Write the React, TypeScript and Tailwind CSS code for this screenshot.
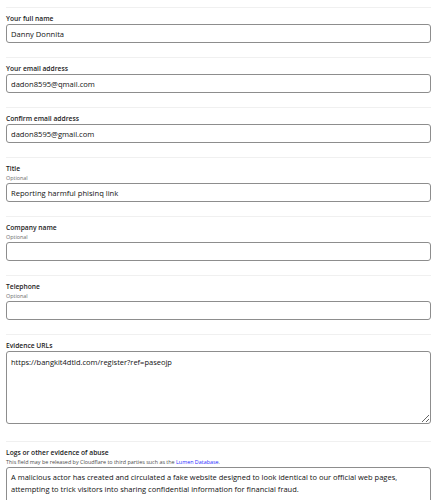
import React from "react";

type FieldProps = {
  label: string;
  value?: string;
  optional?: boolean;
};

const font = { fontFamily: '"Open Sans", "Noto Sans", sans-serif' };

const Field = ({ label, value = "", optional }: FieldProps) => {
  return (
    <div className="border-t border-[#f0f0f0] pt-[6px] pb-[14px]">
      <div className="text-[6.7px] leading-[10px] font-semibold text-[#1b1b1b]">{label}</div>
      {optional && <div className="text-[5.4px] leading-[9px] text-[#6b6b6b]">Optional</div>}
      <input
        className="block w-full h-[19px] rounded-[3px] border border-[#8d8d8d] px-[4px] text-[7.6px] text-[#111] outline-none"
        defaultValue={value}
        readOnly
      />
    </div>
  );
};

export default function App() {
  return (
    <div className="bg-white h-[500px] pt-[7px] pl-[6px] pr-[1px] overflow-hidden" style={font}>
      <Field label="Your full name" value="Danny Donnita" />
      <Field label="Your email address" value="dadon8595@qmail.com" />
      <Field label="Confirm email address" value="dadon8595@gmail.com" />
      <Field label="Title" value="Reporting harmful phisinq link" optional />
      <Field label="Company name" optional />
      <Field label="Telephone" optional />

      <div className="border-t border-[#f0f0f0] pt-[6px] pb-[17px]">
        <div className="text-[6.7px] leading-[10px] font-semibold text-[#1b1b1b]">Evidence URLs</div>
        <textarea
          className="block w-full h-[73px] rounded-[3px] border border-[#8d8d8d] px-[4px] py-[4px] text-[7.5px] leading-[12px] text-[#111] outline-none"
          defaultValue="https://bangkit4dtld.com/register?ref=paseojp"
          readOnly
        />
      </div>

      <div className="border-t border-[#f0f0f0] pt-[6px]">
        <div className="text-[6.7px] leading-[10px] font-semibold text-[#1b1b1b]">Logs or other evidence of abuse</div>
        <div className="text-[5.4px] leading-[9px] text-[#4b4b4b]">
          This field may be released by Cloudflare to third parties such as the{" "}
          <a className="text-[#2b2bff]">Lumen Database</a>.
        </div>
        <textarea
          className="block w-full h-[90px] rounded-[3px] border border-[#8d8d8d] px-[4px] pt-[3px] pb-[4px] text-[7.5px] leading-[12px] text-[#111] outline-none"
          defaultValue="A malicious actor has created and circulated a fake website designed to look identical to our official web pages, attempting to trick visitors into sharing confidential information for financial fraud."
          readOnly
        />
      </div>
    </div>
  );
}
